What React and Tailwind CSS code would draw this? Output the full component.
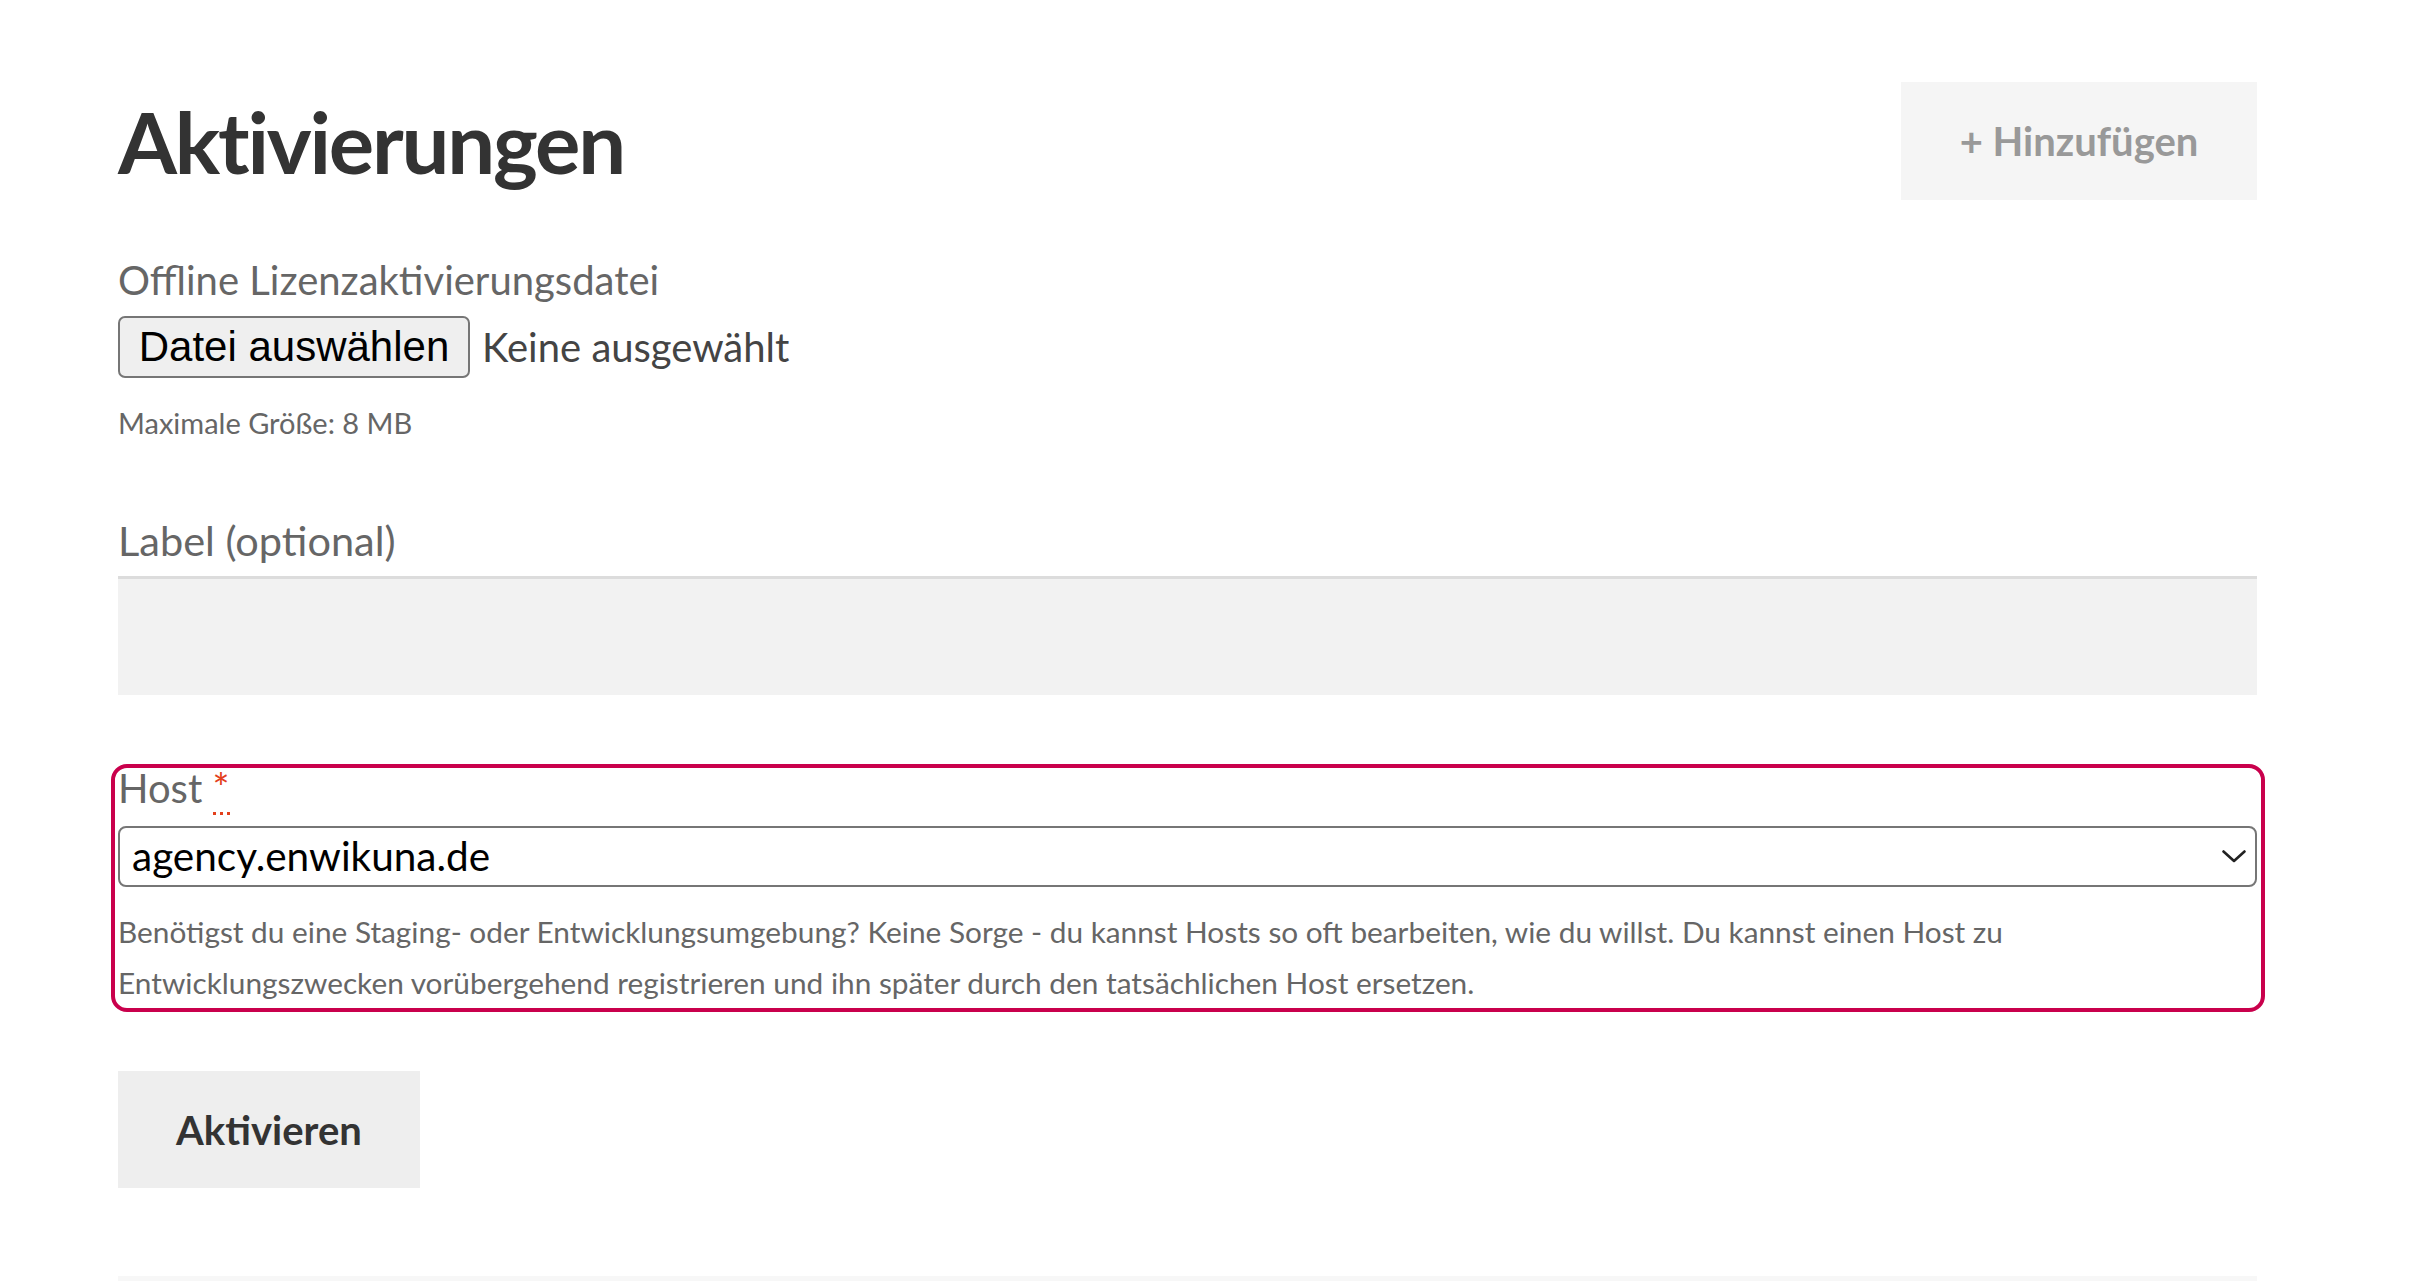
import React from 'react';

const font = { fontFamily: 'Lato, "Noto Sans", sans-serif' };

const Chevron = () => (
  <svg width="24" height="13" viewBox="0 0 24 13" fill="none" className="shrink-0">
    <path d="M1.5 1.5 L12 11 L22.5 1.5" stroke="#222" strokeWidth="2.6" strokeLinecap="round" strokeLinejoin="round" />
  </svg>
);

const App = () => {
  return (
    <div className="min-h-[1281px] bg-white" style={font}>
      <div className="ml-[118px] w-[2139px] pt-[82px]">
        <div className="flex items-center justify-between h-[118px]">
          <h1 className="text-[85px] leading-[118px] font-bold text-[#333] tracking-[-2.2px]">Aktivierungen</h1>
          <button className="w-[356px] h-[118px] bg-[#f5f5f5] text-[#999] text-[40px] font-bold">
            + Hinzufügen
          </button>
        </div>

        <div className="mt-[56px] text-[40px] leading-[48px] text-[#666]">Offline Lizenzaktivierungsdatei</div>
        <div className="mt-[12px] flex items-center h-[62px]">
          <button
            className="h-[62px] w-[352px] rounded-[7px] border-2 border-[#767676] bg-[#efefef] text-black text-[42px] leading-[50px]"
            style={{ fontFamily: '"Liberation Sans", Arial, sans-serif' }}
          >
            Datei auswählen
          </button>
          <span className="ml-[12px] text-[40px] text-[#444]">Keine ausgewählt</span>
        </div>
        <div className="mt-[26px] text-[29px] leading-[38px] text-[#666]">Maximale Größe: 8 MB</div>

        <div className="mt-[74px] text-[41.5px] leading-[48px] text-[#666]">Label (optional)</div>
        <div className="mt-[12px] h-[119px] bg-[#f2f2f2] border-t-[3px] border-[#dcdcdc]"></div>

        <div className="mt-[69px] -ml-[7px] -mr-[8px] border-[4px] border-[#c9004c] rounded-[16px] pl-[3px] pr-[4px]">
          <div className="text-[40px] leading-[40px] text-[#666] h-[40px]">
            Host{' '}
            <abbr className="text-[#e3401c] no-underline border-b-[3px] border-dotted border-[#e3401c]" title="erforderlich">*</abbr>
          </div>
          <div className="mt-[18px] h-[61px] border-2 border-[#767676] rounded-[8px] flex items-center justify-between pl-[12px] pr-[9px]">
            <span className="text-[40.5px] text-black">agency.enwikuna.de</span>
            <Chevron />
          </div>
          <p className="mt-[19px] text-[29.8px] leading-[51px] text-[#666]">
            Benötigst du eine Staging- oder Entwicklungsumgebung? Keine Sorge - du kannst Hosts so oft bearbeiten, wie du willst. Du kannst einen Host zu
            <br />
            Entwicklungszwecken vorübergehend registrieren und ihn später durch den tatsächlichen Host ersetzen.
          </p>
        </div>

        <button className="mt-[59px] w-[302px] h-[117px] bg-[#eeeeee] text-[#333] text-[40px] font-bold block">
          Aktivieren
        </button>

        <div className="mt-[88px] h-[5px] bg-[#f7f7f7]"></div>
      </div>
    </div>
  );
};

export default App;
